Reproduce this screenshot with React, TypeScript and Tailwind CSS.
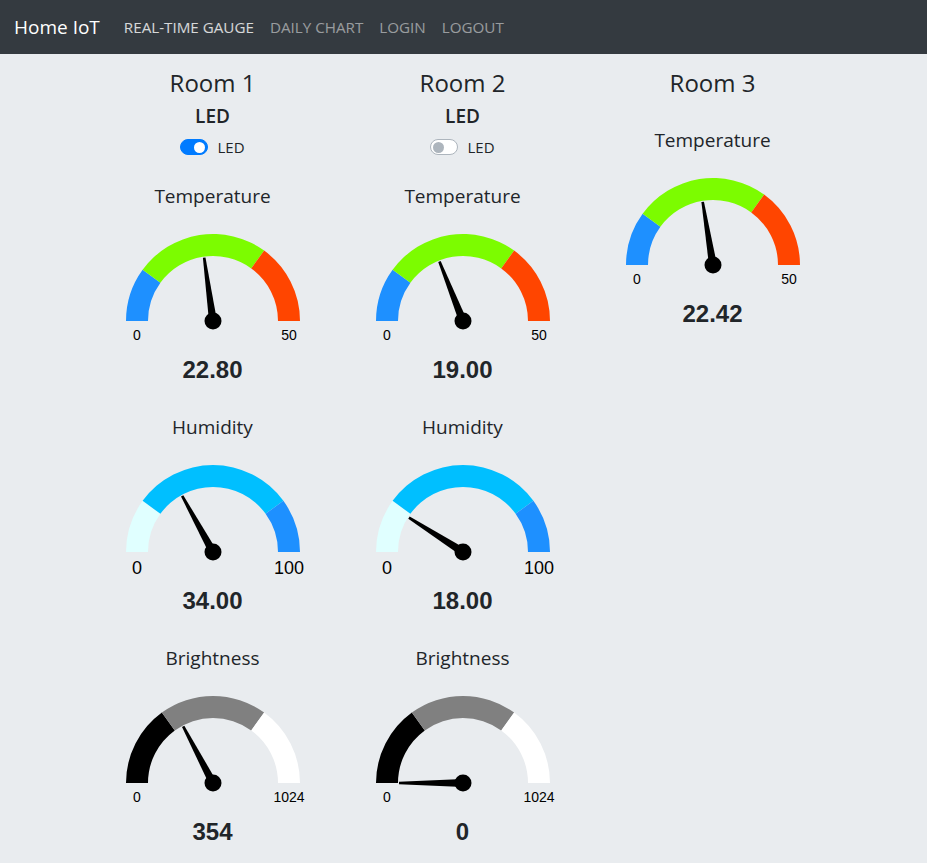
import React from "react";

type Band = { from: number; to: number; color: string };

type GaugeProps = {
  title: string;
  value: number;
  min: number;
  max: number;
  bands: Band[];
  display: string;
  labelSize?: number;
  labelOffset?: number;
};

const CX = 100;
const CY = 113;
const R_OUT = 87;
const R_IN = 65;

// fraction 0..1 -> point on circle of radius r (0 = left, 1 = right)
function pt(f: number, r: number) {
  const a = Math.PI * (1 - f);
  return [CX + r * Math.cos(a), CY - r * Math.sin(a)];
}

function bandPath(f0: number, f1: number) {
  const [x0, y0] = pt(f0, R_OUT);
  const [x1, y1] = pt(f1, R_OUT);
  const [x2, y2] = pt(f1, R_IN);
  const [x3, y3] = pt(f0, R_IN);
  return `M${x0} ${y0} A${R_OUT} ${R_OUT} 0 0 1 ${x1} ${y1} L${x2} ${y2} A${R_IN} ${R_IN} 0 0 0 ${x3} ${y3} Z`;
}

function Gauge({ title, value, min, max, bands, display, labelSize = 14, labelOffset = 14 }: GaugeProps) {
  const span = max - min;
  const f = Math.min(1, Math.max(0, (value - min) / span));
  const a = Math.PI * (1 - f);
  const ux = Math.cos(a);
  const uy = -Math.sin(a);
  // perpendicular
  const px = -uy;
  const py = ux;
  const tipLen = 64;
  const tipW = 1.3;
  const baseW = 4;
  const needle = [
    [CX + ux * tipLen + px * tipW, CY + uy * tipLen + py * tipW],
    [CX + ux * tipLen - px * tipW, CY + uy * tipLen - py * tipW],
    [CX - px * baseW, CY - py * baseW],
    [CX + px * baseW, CY + py * baseW],
  ]
    .map((p) => p.join(","))
    .join(" ");
  const labelX = (R_OUT + R_IN) / 2;

  return (
    <div className="flex flex-col items-center">
      <div className="h-[24px] text-[19px] leading-[24px] font-medium text-[#212529] [font-family:'Open_Sans',sans-serif]">
        {title}
      </div>
      <svg width={200} height={148} viewBox="0 0 200 148">
        {bands.map((b, i) => (
          <path key={i} d={bandPath((b.from - min) / span, (b.to - min) / span)} fill={b.color} />
        ))}
        <polygon points={needle} fill="#000" />
        <circle cx={CX} cy={CY} r={8.5} fill="#000" />
        <text
          x={CX - labelX}
          y={CY + labelOffset}
          textAnchor="middle"
          dominantBaseline="central"
          fontSize={labelSize}
          fill="#000"
          fontFamily="'Liberation Sans', Arial, sans-serif"
        >
          {min}
        </text>
        <text
          x={CX + labelX}
          y={CY + labelOffset}
          textAnchor="middle"
          dominantBaseline="central"
          fontSize={labelSize}
          fill="#000"
          fontFamily="'Liberation Sans', Arial, sans-serif"
        >
          {max}
        </text>
      </svg>
      <div className="h-[28px] text-[24px] leading-[28px] font-bold text-[#212529] [font-family:'Liberation_Sans',Arial,sans-serif]">
        {display}
      </div>
    </div>
  );
}

const tempBands: Band[] = [
  { from: 0, to: 10, color: "#1e90ff" },
  { from: 10, to: 35, color: "#7cfc00" },
  { from: 35, to: 50, color: "#ff4500" },
];

const humBands: Band[] = [
  { from: 0, to: 20, color: "#e0ffff" },
  { from: 20, to: 80, color: "#00bfff" },
  { from: 80, to: 100, color: "#1e90ff" },
];

const lightBands: Band[] = [
  { from: 0, to: 307.2, color: "#000000" },
  { from: 307.2, to: 716.8, color: "#808080" },
  { from: 716.8, to: 1024, color: "#ffffff" },
];

function Toggle({ on }: { on: boolean }) {
  return (
    <div className="flex h-[24px] items-center gap-[9px]">
      <span
        className={`flex h-[16px] w-[28px] items-center rounded-full border px-[2px] ${
          on ? "justify-end border-[#007bff] bg-[#007bff]" : "justify-start border-[#adb5bd] bg-white"
        }`}
      >
        <span className={`h-[11px] w-[11px] rounded-full ${on ? "bg-white" : "bg-[#adb5bd]"}`} />
      </span>
      <span className="text-[15px] leading-[24px] text-[#212529] [font-family:'Open_Sans',sans-serif]">LED</span>
    </div>
  );
}

type Room = {
  name: string;
  led?: boolean;
  temp: number;
  hum?: number;
  light?: number;
};

const rooms: Room[] = [
  { name: "Room 1", led: true, temp: 22.8, hum: 34, light: 354 },
  { name: "Room 2", led: false, temp: 19, hum: 18, light: 0 },
  { name: "Room 3", temp: 22.42 },
];

function RoomColumn({ room }: { room: Room }) {
  const hasLed = room.led !== undefined;
  return (
    <div className="flex w-[250px] flex-col items-center">
      <div className="h-[29px] text-[24px] leading-[29px] font-medium text-[#212529] [font-family:'Open_Sans',sans-serif]">
        {room.name}
      </div>
      {hasLed && (
        <>
          <div className="mt-[7px] h-[24px] text-[19px] leading-[24px] font-semibold text-[#212529] [font-family:'Open_Sans',sans-serif]">
            LED
          </div>
          <div className="mt-[7px]">
            <Toggle on={!!room.led} />
          </div>
        </>
      )}
      <div className={hasLed ? "mt-[25px]" : "mt-[31px]"}>
        <Gauge title="Temperature" value={room.temp} min={0} max={50} bands={tempBands} display={room.temp.toFixed(2)} />
      </div>
      {room.hum !== undefined && (
        <div className="mt-[31px]">
          <Gauge
            title="Humidity"
            value={room.hum}
            min={0}
            max={100}
            bands={humBands}
            display={room.hum.toFixed(2)}
            labelSize={18}
            labelOffset={16}
          />
        </div>
      )}
      {room.light !== undefined && (
        <div className="mt-[31px]">
          <Gauge
            title="Brightness"
            value={room.light}
            min={0}
            max={1024}
            bands={lightBands}
            display={String(room.light)}
          />
        </div>
      )}
    </div>
  );
}

export default function App() {
  return (
    <div className="min-h-screen bg-[#e9ecef]">
      <nav className="flex h-[54px] items-center bg-[#343a40] px-[14px] [font-family:'Open_Sans',sans-serif]">
        <span className="mr-[24px] text-[19px] text-white">Home IoT</span>
        <div className="flex gap-[16px] text-[15.2px]">
          <span className="text-white/80">REAL-TIME GAUGE</span>
          <span className="text-white/50">DAILY CHART</span>
          <span className="text-white/50">LOGIN</span>
          <span className="text-white/50">LOGOUT</span>
        </div>
      </nav>
      <main className="flex justify-center pr-[2px] pt-[14px] pb-[20px]">
        {rooms.map((r) => (
          <RoomColumn key={r.name} room={r} />
        ))}
      </main>
    </div>
  );
}
